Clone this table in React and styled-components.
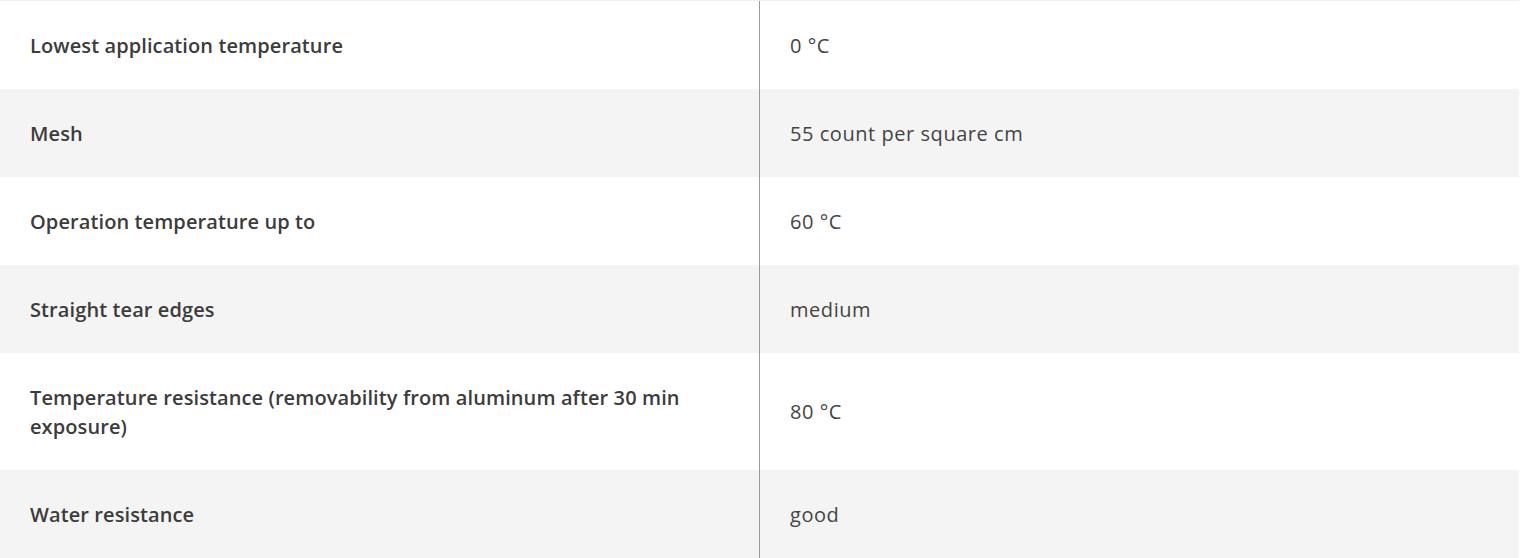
import styled, { createGlobalStyle } from 'styled-components';

const SPECS = [
    { label: 'Lowest application temperature', value: '0 °C' },
    { label: 'Mesh', value: '55 count per square cm' },
    { label: 'Operation temperature up to', value: '60 °C' },
    { label: 'Straight tear edges', value: 'medium' },
    { label: 'Temperature resistance (removability from aluminum after 30 min exposure)', value: '80 °C' },
    { label: 'Water resistance', value: 'good' }
];

const GlobalStyle = createGlobalStyle`
    body {
        margin: 0;
        background: #fff;
        font-family: "Open Sans", Lato, sans-serif;
    }
`;

const App = () => (
    <>
        <GlobalStyle />
        <Table>
            {SPECS.map(({ label, value }, i) => (
                <Row key={label} $striped={i % 2 === 1}>
                    <Label>{label}</Label>
                    <Value>{value}</Value>
                </Row>
            ))}
        </Table>
    </>
);

export default App;

const Table = styled.div`
    width: 1519px;
    border-top: 1px solid #f0f0f0;
`;

const Row = styled.div`
    display: grid;
    grid-template-columns: 759px 1fr;
    background: ${({ $striped }) => ($striped ? '#f4f4f4' : '#fff')};
    font-size: 20px;
    line-height: 29px;
`;

const Cell = styled.div`
    display: flex;
    align-items: center;
    padding: 29.5px 30px;
`;

const Label = styled(Cell)`
    font-weight: 600;
    letter-spacing: 0.1px;
    color: #3c3c3c;
`;

const Value = styled(Cell)`
    border-left: 1px solid #999;
    font-weight: 400;
    letter-spacing: 0.55px;
    color: #444;
`;
